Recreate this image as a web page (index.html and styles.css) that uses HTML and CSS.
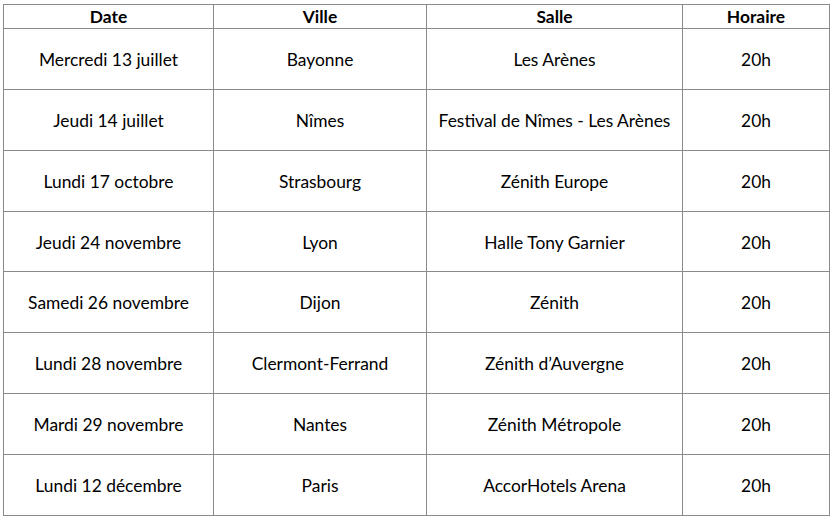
FILE: index.html
```html
<!DOCTYPE html>
<html lang="fr">
<head>
<meta charset="utf-8">
<link rel="stylesheet" href="styles.css">
</head>
<body>
<div class="wrap">
<table class="dates">
<colgroup>
<col class="c1"><col class="c2"><col class="c3"><col class="c4">
</colgroup>
<thead>
<tr><th>Date</th><th>Ville</th><th>Salle</th><th>Horaire</th></tr>
</thead>
<tbody>
<tr><td>Mercredi 13 juillet</td><td>Bayonne</td><td>Les Arènes</td><td>20h</td></tr>
<tr><td>Jeudi 14 juillet</td><td>Nîmes</td><td>Festival de Nîmes - Les Arènes</td><td>20h</td></tr>
<tr><td>Lundi 17 octobre</td><td>Strasbourg</td><td>Zénith Europe</td><td>20h</td></tr>
<tr class="short"><td>Jeudi 24 novembre</td><td>Lyon</td><td>Halle Tony Garnier</td><td>20h</td></tr>
<tr><td>Samedi 26 novembre</td><td>Dijon</td><td>Zénith</td><td>20h</td></tr>
<tr><td>Lundi 28 novembre</td><td>Clermont-Ferrand</td><td>Zénith d’Auvergne</td><td>20h</td></tr>
<tr><td>Mardi 29 novembre</td><td>Nantes</td><td>Zénith Métropole</td><td>20h</td></tr>
<tr><td>Lundi 12 décembre</td><td>Paris</td><td>AccorHotels Arena</td><td>20h</td></tr>
</tbody>
</table>
</div>
</body>
</html>
```
FILE: styles.css
```css
html, body {
  margin: 0;
  padding: 0;
  background: #fff;
}
.wrap {
  padding: 4px 0 0 3px;
}
.dates {
  border-collapse: collapse;
  table-layout: fixed;
  width: 826px;
  font-family: Lato, "Open Sans", sans-serif;
  font-size: 17.4px;
  color: #000;
}
.c1 { width: 210px; }
.c2 { width: 213px; }
.c3 { width: 256px; }
.c4 { width: 147px; }
.dates th, .dates td {
  border: 1px solid #8a8a8a;
  text-align: center;
  padding: 0;
  line-height: 20px;
}
.dates th {
  height: 22px;
  padding-top: 1px;
  font-weight: bold;
}
.dates td {
  height: 58px;
  padding-top: 2px;
}
.dates tr.short td {
  height: 57px;
}
```
